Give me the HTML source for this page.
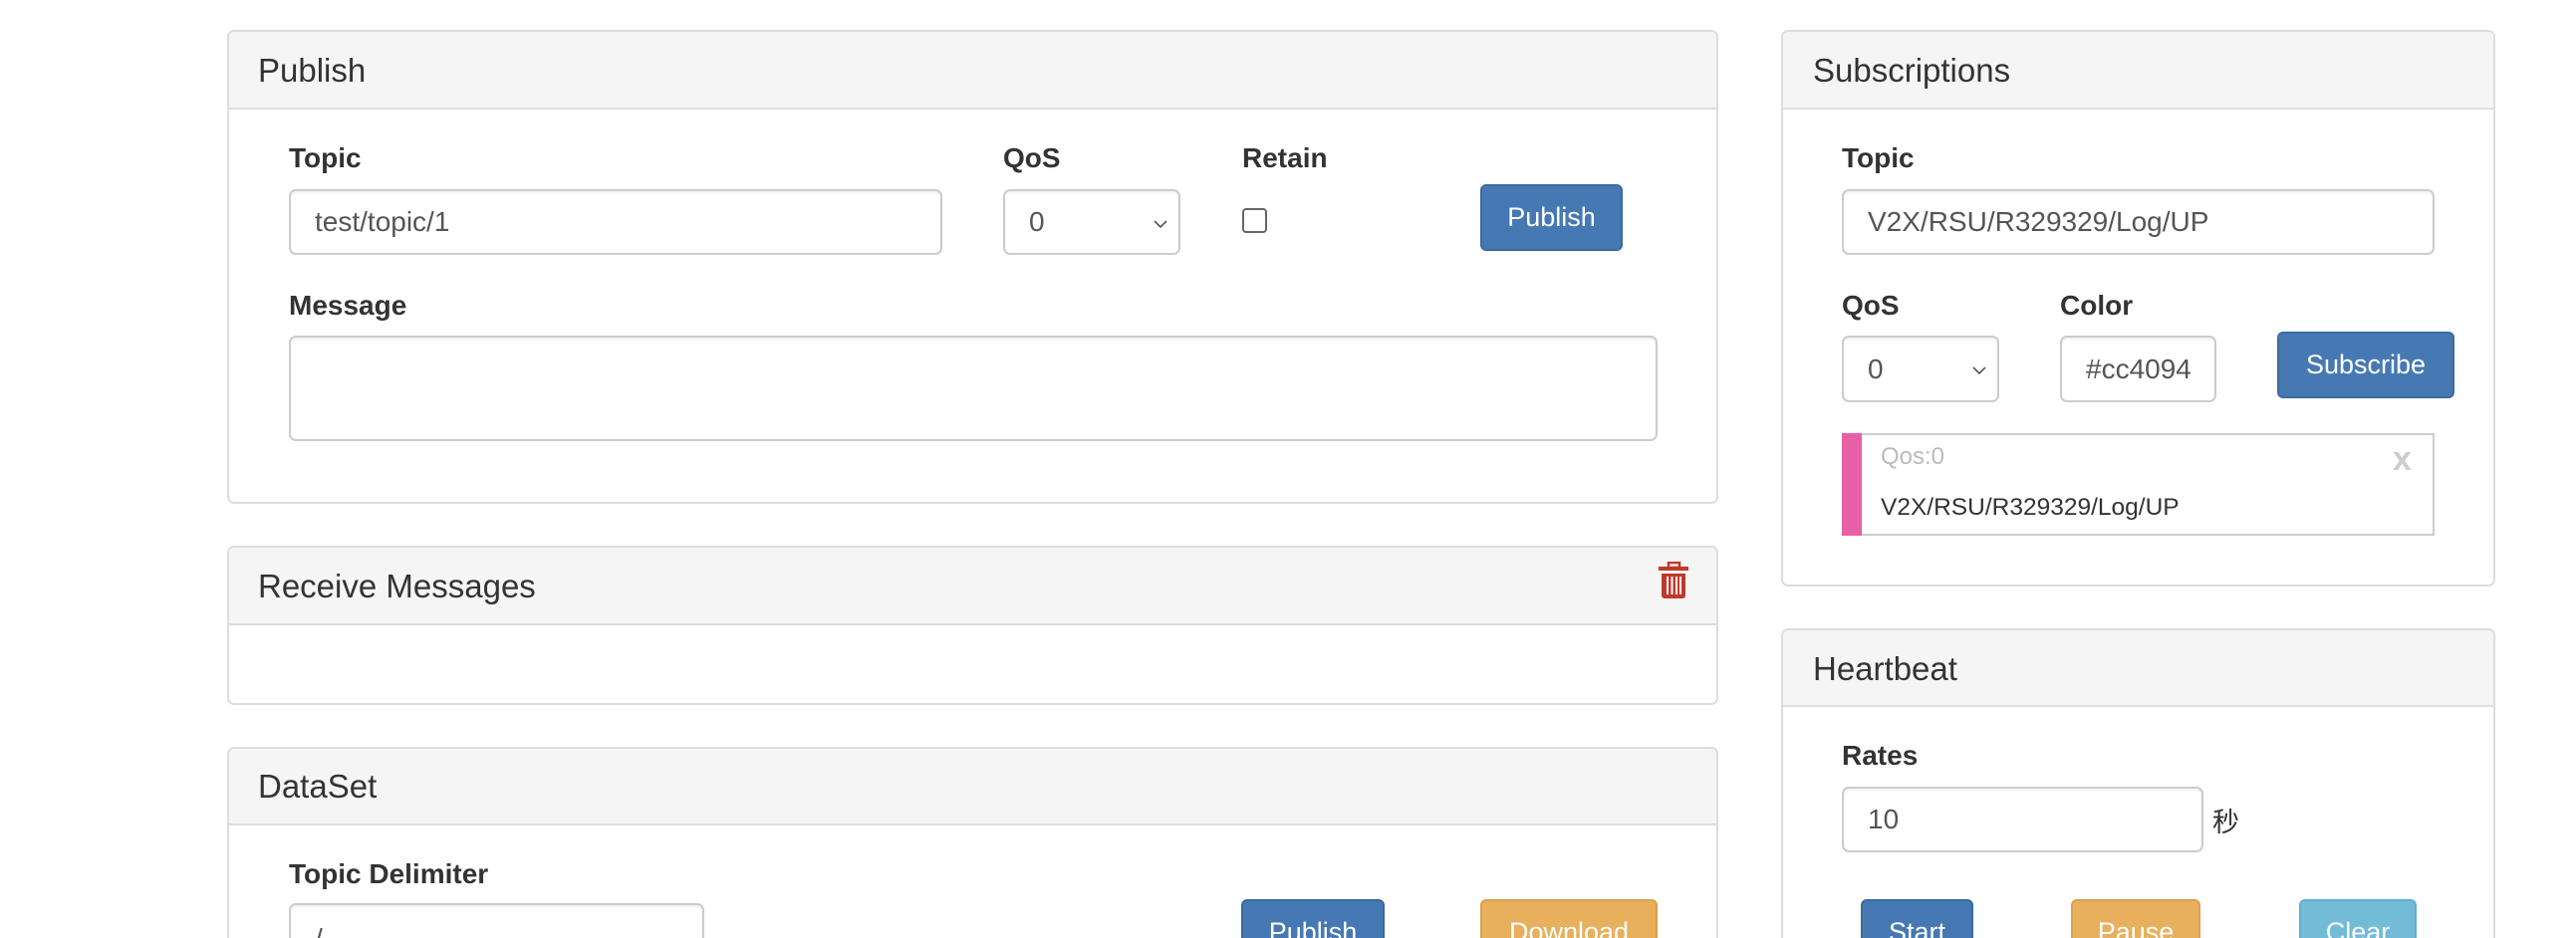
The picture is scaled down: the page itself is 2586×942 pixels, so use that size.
<!DOCTYPE html>
<html><head><meta charset="utf-8"><style>
*{box-sizing:border-box;margin:0;padding:0}
html,body{width:2586px;height:942px;overflow:hidden}
body{background:#fff;position:relative;font-family:"Liberation Sans","Noto Sans CJK SC",sans-serif;color:#333}
.a{position:absolute}
.panel{position:absolute;border:2px solid #ddd;border-radius:7px;background:#fff;overflow:hidden}
.ph{position:absolute;left:0;right:0;top:0;background:#f5f5f5;border-bottom:2px solid #ddd}
.pt{position:absolute;left:29px;font-size:33px;line-height:34px;color:#333}
.lbl{position:absolute;font-size:28px;font-weight:bold;line-height:30px;transform:translateY(-15px)}
.inp{position:absolute;border:2px solid #ccc;border-radius:7px;background:#fff;font-size:28px;color:#555;padding-left:24px;display:flex;align-items:center;box-shadow:inset 0 2px 2px rgba(0,0,0,.06)}
.btn{position:absolute;border-radius:6px;color:#fff;font-size:27px;display:flex;align-items:center;justify-content:center}
.bp{background:#4679b3;border:2px solid #3b6aa0}
.bw{background:#e8b05c;border:2px solid #dca04a}
.bi{background:#72bcd8;border:2px solid #63b0cf}
</style></head><body>

<div class="panel" style="left:228px;top:30px;width:1497px;height:476px">
 <div class="ph" style="height:78px"><div class="pt" style="top:22px">Publish</div></div>
</div>
<div class="lbl" style="left:290px;top:159px">Topic</div>
<div class="inp" style="left:290px;top:190px;width:656px;height:66px">test/topic/1</div>
<div class="lbl" style="left:1007px;top:159px">QoS</div>
<div class="inp" style="left:1007px;top:190px;width:178px;height:66px">0<svg class="a" style="right:10px;top:28px" width="16" height="10" viewBox="0 0 16 10"><path d="M2 2l6 6 6-6" stroke="#444" stroke-width="1.5" fill="none"/></svg></div>
<div class="lbl" style="left:1247px;top:159px">Retain</div>
<div class="a" style="left:1247px;top:209px;width:25px;height:25px;border:2px solid #666;border-radius:4px"></div>
<div class="btn bp" style="left:1486px;top:185px;width:143px;height:67px">Publish</div>
<div class="lbl" style="left:290px;top:307px">Message</div>
<div class="inp" style="left:290px;top:337px;width:1374px;height:106px"></div>

<div class="panel" style="left:228px;top:548px;width:1497px;height:160px">
 <div class="ph" style="height:78px"><div class="pt" style="top:22px">Receive Messages</div></div>
</div>
<svg class="a" style="left:1664px;top:564px" width="32" height="38" viewBox="0 0 32 38"><rect x="11" y="1" width="11" height="5" fill="none" stroke="#c0392b" stroke-width="2.5"/><rect x="1" y="5" width="30" height="4" fill="#c0392b"/><path d="M4 12h24v22a3 3 0 0 1-3 3H7a3 3 0 0 1-3-3z" fill="#c0392b"/><path d="M10 15v18M14.5 15v18M19 15v18M23 15v18" stroke="#fff" stroke-width="2"/></svg>

<div class="panel" style="left:228px;top:750px;width:1497px;height:240px">
 <div class="ph" style="height:77px"><div class="pt" style="top:21px">DataSet</div></div>
</div>
<div class="lbl" style="left:290px;top:878px">Topic Delimiter</div>
<div class="inp" style="left:290px;top:907px;width:417px;height:66px;align-items:flex-start;padding-top:18px">/</div>
<div class="btn bp" style="left:1246px;top:903px;width:144px;height:67px;align-items:flex-start;padding-top:16px">Publish</div>
<div class="btn bw" style="left:1486px;top:903px;width:178px;height:67px;align-items:flex-start;padding-top:16px">Download</div>

<div class="panel" style="left:1788px;top:30px;width:717px;height:559px">
 <div class="ph" style="height:78px"><div class="pt" style="top:22px;left:30px">Subscriptions</div></div>
</div>
<div class="lbl" style="left:1849px;top:159px">Topic</div>
<div class="inp" style="left:1849px;top:190px;width:595px;height:66px">V2X/RSU/R329329/Log/UP</div>
<div class="lbl" style="left:1849px;top:307px">QoS</div>
<div class="inp" style="left:1849px;top:337px;width:158px;height:67px">0<svg class="a" style="right:10px;top:28px" width="16" height="10" viewBox="0 0 16 10"><path d="M2 2l6 6 6-6" stroke="#444" stroke-width="1.5" fill="none"/></svg></div>
<div class="lbl" style="left:2068px;top:307px">Color</div>
<div class="inp" style="left:2068px;top:337px;width:157px;height:67px">#cc4094</div>
<div class="btn bp" style="left:2286px;top:333px;width:178px;height:67px">Subscribe</div>
<div class="a" style="left:1849px;top:435px;width:595px;height:103px;border:2px solid #ccc;border-left:none"></div>
<div class="a" style="left:1849px;top:435px;width:20px;height:103px;background:#e85fa8"></div>
<div class="a" style="left:1888px;top:445px;font-size:24px;color:#bbb">Qos:0</div>
<div class="a" style="left:2402px;top:442px;font-size:34px;font-weight:bold;color:#ccc">x</div>
<div class="a" style="left:1888px;top:496px;font-size:24.5px;color:#333">V2X/RSU/R329329/Log/UP</div>

<div class="panel" style="left:1788px;top:631px;width:717px;height:360px">
 <div class="ph" style="height:77px"><div class="pt" style="top:22px;left:30px">Heartbeat</div></div>
</div>
<div class="lbl" style="left:1849px;top:759px">Rates</div>
<div class="inp" style="left:1849px;top:790px;width:363px;height:66px">10</div>
<div class="a" style="left:2221px;top:804px;font-size:27px">秒</div>
<div class="btn bp" style="left:1868px;top:903px;width:113px;height:67px;align-items:flex-start;padding-top:16px">Start</div>
<div class="btn bw" style="left:2079px;top:903px;width:130px;height:67px;align-items:flex-start;padding-top:16px">Pause</div>
<div class="btn bi" style="left:2308px;top:903px;width:118px;height:67px;align-items:flex-start;padding-top:16px">Clear</div>
</body></html>
